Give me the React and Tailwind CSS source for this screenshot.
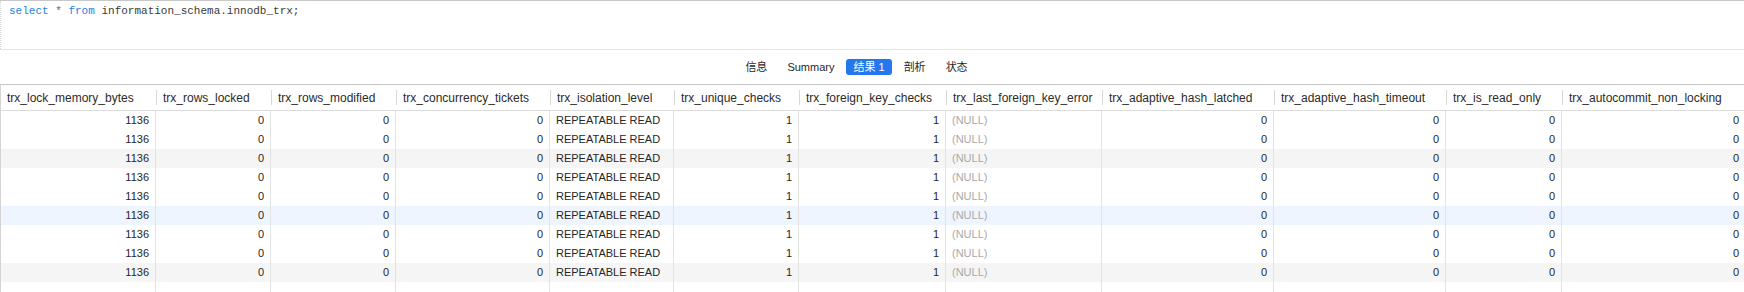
import React from "react";

const cols = [
  { name: "trx_lock_memory_bytes", w: 155 },
  { name: "trx_rows_locked", w: 115 },
  { name: "trx_rows_modified", w: 125 },
  { name: "trx_concurrency_tickets", w: 154 },
  { name: "trx_isolation_level", w: 124 },
  { name: "trx_unique_checks", w: 125 },
  { name: "trx_foreign_key_checks", w: 147 },
  { name: "trx_last_foreign_key_error", w: 156 },
  { name: "trx_adaptive_hash_latched", w: 172 },
  { name: "trx_adaptive_hash_timeout", w: 172 },
  { name: "trx_is_read_only", w: 116 },
  { name: "trx_autocommit_non_locking", w: 183 },
];

const rowVals = [
  { v: "1136", a: "r" },
  { v: "0", a: "r" },
  { v: "0", a: "r" },
  { v: "0", a: "r" },
  { v: "REPEATABLE READ", a: "l" },
  { v: "1", a: "r" },
  { v: "1", a: "r" },
  { v: "(NULL)", a: "l", null: true },
  { v: "0", a: "r" },
  { v: "0", a: "r" },
  { v: "0", a: "r" },
  { v: "0", a: "r" },
];

const rowBg = ["bg-white", "bg-white", "bg-[#f5f5f5]", "bg-white", "bg-white", "bg-[#eef5fe]", "bg-white", "bg-white", "bg-[#f5f5f5]"];

function Tab({ label, active }) {
  return (
    <div
      className={
        active
          ? "h-[16px] px-[7px] rounded-[3px] bg-[#2577ee] text-white flex items-center"
          : "h-[16px] px-[8px] text-[#1f1f1f] flex items-center"
      }
    >
      {label}
    </div>
  );
}

export default function App() {
  return (
    <div
      className="w-[1744px] h-[292px] overflow-hidden bg-white"
      style={{ fontFamily: '"Liberation Sans", "Noto Sans CJK SC", Arial, sans-serif' }}
    >
      {/* Editor */}
      <div className="h-[50px] border-t border-b border-t-[#c8c8c8] border-b-[#e4e4e4] flex">
        <div className="w-[1px] border-l border-dotted border-[#d6d6d6]" />
        <div
          className="pl-[8px] pt-[3px] text-[11px] leading-[15px] text-[#3a3a3a]"
          style={{ fontFamily: '"Liberation Mono", "DejaVu Sans Mono", monospace' }}
        >
          <span className="text-[#1f7fe3]">select</span>
          <span className="text-[#666]"> * </span>
          <span className="text-[#1f7fe3]">from</span>
          <span> information_schema.innodb_trx;</span>
        </div>
      </div>

      {/* Tabs */}
      <div className="h-[35px] border-b border-[#c6c6c6] flex items-center justify-center pr-[31px] gap-[4px] text-[11px]">
        <Tab label="信息" />
        <Tab label="Summary" />
        <Tab label="结果 1" active />
        <Tab label="剖析" />
        <Tab label="状态" />
      </div>

      {/* Header */}
      <div className="h-[26px] border-b border-[#dcdcdc] flex border-l border-l-[#d4d4d4]">
        {cols.map((c, i) => (
          <div key={c.name} className="flex items-center shrink-0" style={{ width: c.w }}>
            {i > 0 && <div className="w-[1px] h-[15px] bg-[#d9d9d9]" />}
            <div className="pl-[6px] text-[12px] text-[#2b2b2b] whitespace-nowrap">{c.name}</div>
          </div>
        ))}
      </div>

      {/* Rows */}
      {rowBg.map((bg, r) => (
        <div key={r} className={"h-[19px] flex border-l border-[#d4d4d4] " + bg}>
          {cols.map((c, i) => {
            const cell = rowVals[i];
            return (
              <div
                key={i}
                className={
                  "shrink-0 h-full flex items-center px-[6px] text-[11px] whitespace-nowrap " +
                  (i < cols.length - 1 ? "border-r border-[#e3e3e3] " : "") +
                  (cell.a === "r" ? "justify-end " : "justify-start ") +
                  (cell.null ? "text-[#a9a9a9]" : "text-[#262626]")
                }
                style={{ width: c.w }}
              >
                {cell.v}
              </div>
            );
          })}
        </div>
      ))}
      <div className="h-[20px] flex border-l border-[#d4d4d4]">
        {cols.map((c, i) => (
          <div
            key={i}
            className={"shrink-0 h-full " + (i < cols.length - 1 ? "border-r border-[#e3e3e3]" : "")}
            style={{ width: c.w }}
          />
        ))}
      </div>
    </div>
  );
}
